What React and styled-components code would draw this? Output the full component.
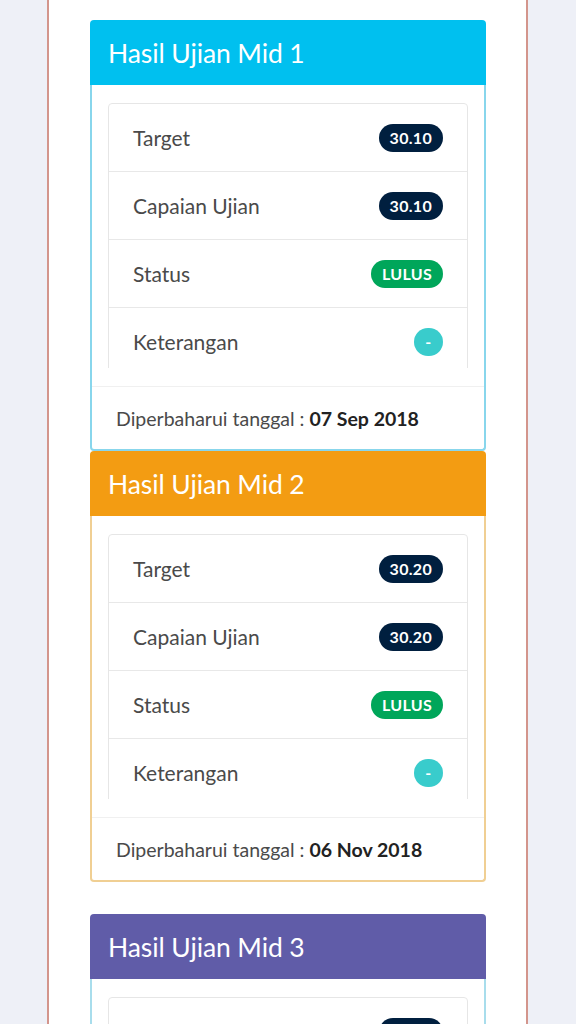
import styled, { createGlobalStyle } from 'styled-components';

const Global = createGlobalStyle`
  html, body {
    margin: 0;
    padding: 0;
    background: #eef0f7;
    font-family: "Lato", "Open Sans", "Liberation Sans", sans-serif;
  }
`;

const Page = styled.div`
  height: 1024px;
  background: #eef0f7;
  overflow: hidden;
`;

const Frame = styled.div`
  width: 481px;
  margin-left: 47px;
  min-height: 1024px;
  background: #fff;
  border-left: 2px solid #d3958c;
  border-right: 2px solid #d3958c;
  padding: 20px 40px 0 41px;
  box-sizing: border-box;
`;

const Card = styled.section`
  margin-top: ${({ $gap }) => $gap || 0}px;
  border-radius: 4px;
`;

const Header = styled.div`
  height: 65px;
  background: ${({ $color }) => $color};
  border-radius: 4px 4px 0 0;
  display: flex;
  align-items: center;
  padding: 0 18px;
  color: #fff;
  font-size: 26.5px;
  letter-spacing: -0.1px;
`;

const Body = styled.div`
  border: 2px solid ${({ $border }) => $border};
  border-top: none;
  border-radius: 0 0 4px 4px;
`;

const ListArea = styled.div`
  padding: 18px 16px;
`;

const Scroll = styled.div`
  max-height: 265px;
  overflow: hidden;
`;

const List = styled.ul`
  list-style: none;
  margin: 0;
  padding: 0;
  border: 1px solid #e6e6e6;
  border-radius: 4px;
`;

const Row = styled.li`
  height: 67px;
  display: flex;
  align-items: center;
  justify-content: space-between;
  padding: 0 24px;
  border-bottom: 1px solid #e8e8e8;
  font-size: 21px;
  color: #4a4a4a;
`;

const Badge = styled.span`
  display: inline-flex;
  align-items: center;
  justify-content: center;
  height: 28px;
  min-width: 29px;
  padding: ${({ $round }) => ($round ? '0' : '0 11px')};
  border-radius: 14px;
  background: ${({ $bg }) => $bg};
  color: #fff;
  font-size: 16px;
  font-weight: 700;
  letter-spacing: 0.3px;
  box-sizing: border-box;
`;

const Footer = styled.div`
  height: 62px;
  border-top: 1px solid #f0f0f0;
  display: flex;
  align-items: center;
  padding: 0 24px;
  font-size: 19.5px;
  color: #4a4a4a;
  b {
    color: #222;
    margin-left: 5px;
  }
`;

const cards = [
  { title: 'Hasil Ujian Mid 1', color: '#00c0ef', border: '#88d6ec', target: '30.10', score: '30.10', date: '07 Sep 2018', gap: 0 },
  { title: 'Hasil Ujian Mid 2', color: '#f39c12', border: '#f0cf93', target: '30.20', score: '30.20', date: '06 Nov 2018', gap: 0 },
  { title: 'Hasil Ujian Mid 3', color: '#605ca8', border: '#a8ddec', target: '30.30', score: '30.30', date: '08 Jan 2019', gap: 32 },
];

function ResultCard({ c }) {
  return (
    <Card $gap={c.gap}>
      <Header $color={c.color}>{c.title}</Header>
      <Body $border={c.border}>
        <ListArea>
          <Scroll>
            <List>
              <Row>Target<Badge $bg="#001f3f">{c.target}</Badge></Row>
              <Row>Capaian Ujian<Badge $bg="#001f3f">{c.score}</Badge></Row>
              <Row>Status<Badge $bg="#00a65a">LULUS</Badge></Row>
              <Row>Keterangan<Badge $bg="#39cccc" $round>-</Badge></Row>
            </List>
          </Scroll>
        </ListArea>
        <Footer>
          Diperbaharui tanggal :<b>{c.date}</b>
        </Footer>
      </Body>
    </Card>
  );
}

export default function App() {
  return (
    <Page>
      <Global />
      <Frame>
        {cards.map((c) => (
          <ResultCard key={c.title} c={c} />
        ))}
      </Frame>
    </Page>
  );
}
